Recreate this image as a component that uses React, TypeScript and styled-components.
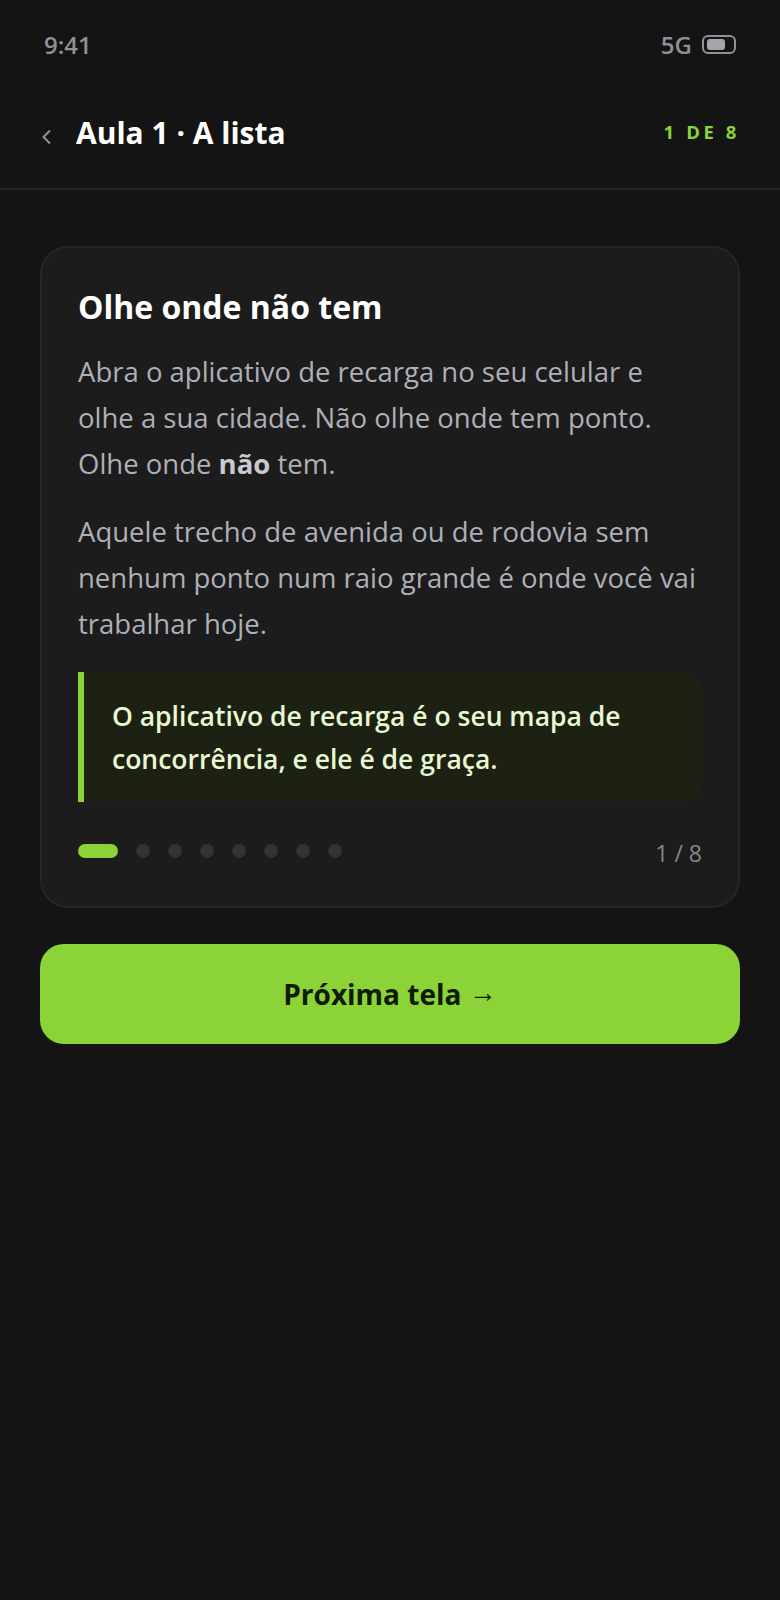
import * as React from 'react';
import styled, { createGlobalStyle } from 'styled-components';

const GlobalStyle = createGlobalStyle`
html, body {
  margin: 0;
  padding: 0;
  background: #141414;
}
* { box-sizing: border-box; }
`;

const Screen = styled.div`
  width: 780px;
  height: 1600px;
  background: #141414;
  font-family: "Open Sans", "Noto Sans", sans-serif;
  color: #fff;
`;

const StatusBar = styled.div`
  height: 90px;
  padding: 28px 44px 0;
  display: flex;
  justify-content: space-between;
  align-items: flex-start;
  font-size: 24px;
  line-height: 33px;
  font-weight: 600;
  color: #8e9196;
`;

const StatusRight = styled.div`
  display: flex;
  align-items: center;
  gap: 10px;
`;

const Battery = styled.div`
  width: 34px;
  height: 19px;
  border: 2px solid #8e9196;
  border-radius: 6px;
  padding: 2px 3px;
  display: flex;
`;

const BatteryFill = styled.div`
  width: 18px;
  background: #a3a6ab;
  border-radius: 3px;
`;

const Header = styled.div`
  height: 100px;
  padding: 0 40px 12px;
  display: flex;
  align-items: center;
  gap: 20px;
  border-bottom: 2px solid #262626;
`;

const BackIcon = styled.svg`
  width: 16px;
  height: 22px;
  margin-top: 8px;
  color: #8e9196;
`;

const Title = styled.div`
  flex: 1;
  font-size: 30px;
  font-weight: 700;
  line-height: 40px;
`;

const Step = styled.div`
  font-size: 18.5px;
  line-height: 24px;
  margin-bottom: 2px;
  font-weight: 700;
  letter-spacing: 3.6px;
  color: #8bd336;
`;

const Content = styled.div`
  padding: 56px 40px 0;
  display: flex;
  flex-direction: column;
  gap: 36px;
`;

const Card = styled.div`
  background: #1c1c1c;
  border: 2px solid #262626;
  border-radius: 28px;
  padding: 36px;
`;

const CardTitle = styled.h2`
  margin: 0 0 19px;
  font-size: 32px;
  line-height: 46px;
  font-weight: 700;
`;

const Paragraph = styled.p`
  margin: 0 0 22px;
  font-size: 27.5px;
  line-height: 46px;
  color: #adb0b8;
  strong { color: #c8cad0; font-weight: 700; }
`;

const Callout = styled.div`
  margin-top: 25px;
  background: #1d2113;
  border-left: 6px solid #8bd336;
  border-radius: 0 20px 20px 0;
  padding: 23px 28px 21px;
  font-size: 26.5px;
  line-height: 43px;
  font-weight: 600;
  color: #e8f8d0;
`;

const Progress = styled.div`
  margin-top: 42px;
  padding-bottom: 8px;
  display: flex;
  align-items: flex-start;
  justify-content: space-between;
`;

const Dots = styled.div`
  display: flex;
  align-items: center;
  gap: 18px;
  height: 14px;
`;

const Dot = styled.span<{ $active?: boolean }>`
  width: ${p => (p.$active ? '40px' : '14px')};
  height: 14px;
  border-radius: 7px;
  background: ${p => (p.$active ? '#8bd336' : '#333333')};
`;

const Count = styled.div`
  font-size: 23px;
  line-height: 18px;
  color: #85868c;
`;

const NextButton = styled.button`
  height: 100px;
  border: 0;
  border-radius: 24px;
  background: #8bd336;
  color: #101a05;
  font-family: inherit;
  font-size: 28px;
  font-weight: 700;
`;

const Arrow = styled.span`
  font-family: "Liberation Sans", sans-serif;
  font-weight: 400;
  vertical-align: 3px;
`;

export default function App() {
  return (
    <Screen>
      <GlobalStyle />
      <StatusBar>
        <span>9:41</span>
        <StatusRight>
          <span>5G</span>
          <Battery><BatteryFill /></Battery>
        </StatusRight>
      </StatusBar>
      <Header>
        <BackIcon viewBox="0 0 16 22" fill="none" stroke="currentColor" strokeWidth="2">
          <path d="M10 4.5 L3.5 11 L10 17.5" />
        </BackIcon>
        <Title>Aula 1 · A lista</Title>
        <Step>1 DE 8</Step>
      </Header>
      <Content>
        <Card>
          <CardTitle>Olhe onde não tem</CardTitle>
          <Paragraph>Abra o aplicativo de recarga no seu celular e olhe a sua cidade. Não olhe onde tem ponto. Olhe onde <strong>não</strong> tem.</Paragraph>
          <Paragraph>Aquele trecho de avenida ou de rodovia sem nenhum ponto num raio grande é onde você vai trabalhar hoje.</Paragraph>
          <Callout>O aplicativo de recarga é o seu mapa de concorrência, e ele é de graça.</Callout>
          <Progress>
            <Dots>
              <Dot $active />
              {[1, 2, 3, 4, 5, 6, 7].map(i => <Dot key={i} />)}
            </Dots>
            <Count>1 / 8</Count>
          </Progress>
        </Card>
        <NextButton>Próxima tela <Arrow>→</Arrow></NextButton>
      </Content>
    </Screen>
  );
}
